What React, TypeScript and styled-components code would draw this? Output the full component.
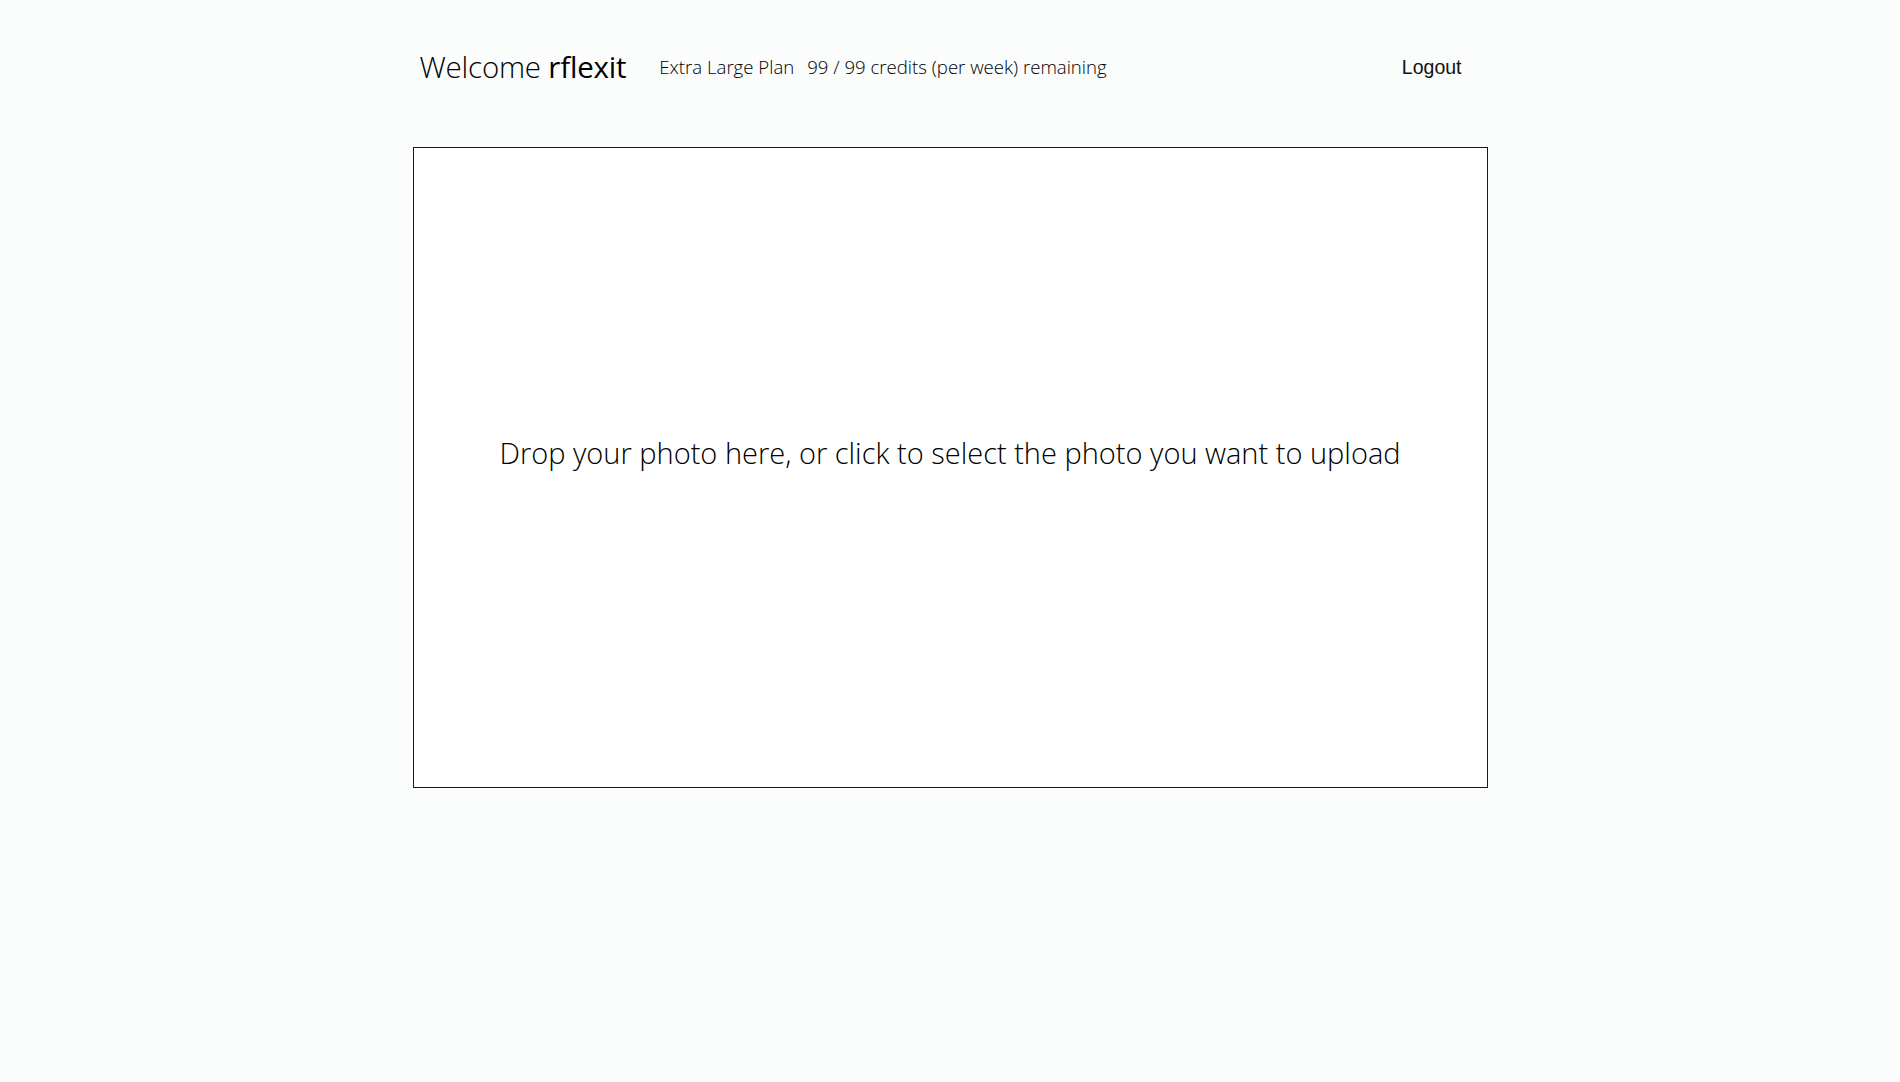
import React from "react";
import styled, { createGlobalStyle } from "styled-components";

const GlobalStyle = createGlobalStyle`
  html, body {
    margin: 0;
    padding: 0;
    background: #fbfcfc;
    font-family: "Open Sans", "Liberation Sans", sans-serif;
    color: #000;
  }
`;

const Page = styled.div`
  width: 1075px;
  margin: 0 auto;
  padding-top: 46px;
`;

const Header = styled.header`
  display: flex;
  align-items: center;
  height: 40px;
  padding-left: 7px;
  margin-bottom: 61px;
`;

const Welcome = styled.h1`
  margin: 0;
  font-size: 29.5px;
  font-weight: 300;
  letter-spacing: -0.2px;
`;

const UserName = styled.span`
  font-weight: 500;
`;

const PlanInfo = styled.div`
  display: flex;
  gap: 13px;
  margin-left: 33px;
  font-size: 18.6px;
  font-weight: 300;
`;

const LogoutButton = styled.button`
  margin: 3px 26px 0 auto;
  padding: 0;
  border: none;
  background: none;
  font-family: "Liberation Sans", Arial, sans-serif;
  font-size: 19.5px;
  color: #111;
  cursor: pointer;
`;

const DropZone = styled.div`
  height: 641px;
  box-sizing: border-box;
  border: 1px solid #1a1a1a;
  background: #fff;
  display: flex;
  align-items: center;
  justify-content: center;
  padding-bottom: 30px;
  cursor: pointer;
`;

const DropText = styled.p`
  margin: 0;
  font-size: 29px;
  font-weight: 300;
`;

export default function App() {
  return (
    <>
      <GlobalStyle />
      <Page>
        <Header>
          <Welcome>
            Welcome <UserName>rflexit</UserName>
          </Welcome>
          <PlanInfo>
            <span>Extra Large Plan</span>
            <span>99 / 99 credits (per week) remaining</span>
          </PlanInfo>
          <LogoutButton>Logout</LogoutButton>
        </Header>
        <DropZone>
          <DropText>
            Drop your photo here, or click to select the photo you want to upload
          </DropText>
        </DropZone>
      </Page>
    </>
  );
}
